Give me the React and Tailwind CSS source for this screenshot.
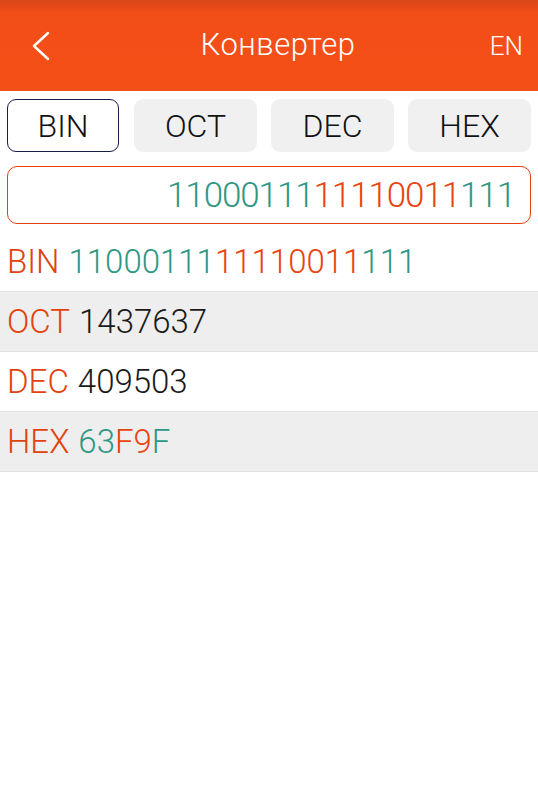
import React from 'react';

const TEAL = 'text-[#2f9784]';
const ORANGE = 'text-[#e8440f]';

// alternate colours every `size` chars, starting from the left
const Grouped = ({ value, size }) => {
  const parts = [];
  for (let i = 0; i < value.length; i += size) parts.push(value.slice(i, i + size));
  return parts.map((p, i) => (
    <span key={i} className={i % 2 === 0 ? TEAL : ORANGE}>
      {p}
    </span>
  ));
};

const tabs = ['BIN', 'OCT', 'DEC', 'HEX'];

const Row = ({ label, children, shaded }) => (
  <div
    className={`h-[60px] flex items-center pl-[7px] border-b border-[#e2e2e2] text-[33px] font-light leading-none ${
      shaded ? 'bg-[#eeeeee]' : 'bg-white'
    }`}
  >
    <span className="text-[#e2420e]">{label}</span>
    <span className="ml-[9px]">{children}</span>
  </div>
);

export default function App() {
  const bin = '1100011111110011111';

  return (
    <div className="w-[538px] h-[800px] bg-white font-['Roboto',sans-serif] overflow-hidden">
      <header className="h-[91px] bg-gradient-to-b from-[#d9461a] via-[#f24e17] via-[14%] to-[#f44f17] flex items-center relative">
        <svg className="absolute left-[31px] top-[31px]" width="20" height="30" viewBox="0 0 20 30">
          <path d="M17 2 L3 15 L17 28" fill="none" stroke="white" strokeWidth="2.4" strokeLinecap="round" strokeLinejoin="round" />
        </svg>
        <h1 className="flex-1 text-center text-white text-[31px] font-light tracking-[0.5px] leading-none -mt-[2px] pl-[18px]">Конвертер</h1>
        <span className="absolute right-[15px] top-[33px] text-white text-[26px] font-light leading-none">EN</span>
      </header>

      <div className="flex px-[7px] pt-[8px]">
        {tabs.map((t, i) => (
          <button
            key={t}
            className={`h-[53px] rounded-[9px] text-[32px] font-light text-[#111] leading-none flex items-center justify-center ${
              i === 0
                ? 'w-[112px] border border-[#1c1c4a] bg-white'
                : 'w-[123px] bg-[#f0f0f0] ' + (i === 1 ? 'ml-[15px]' : 'ml-[14px]')
            }`}
          >
            {t}
          </button>
        ))}
      </div>

      <div className="mx-[7px] mt-[14px] h-[58px] rounded-[10px] border border-[#e5410e] flex items-center justify-end pr-[15px] text-[35px] font-light tracking-[-1.1px] leading-none">
        <Grouped value={bin} size={8} />
      </div>

      <div className="mt-[8px]">
        <Row label="BIN">
          <Grouped value={bin} size={8} />
        </Row>
        <Row label="OCT" shaded>
          <span className="text-[#1a1a1a]">1437637</span>
        </Row>
        <Row label="DEC">
          <span className="text-[#1a1a1a]">409503</span>
        </Row>
        <Row label="HEX" shaded>
          <Grouped value="63F9F" size={2} />
        </Row>
      </div>
    </div>
  );
}
